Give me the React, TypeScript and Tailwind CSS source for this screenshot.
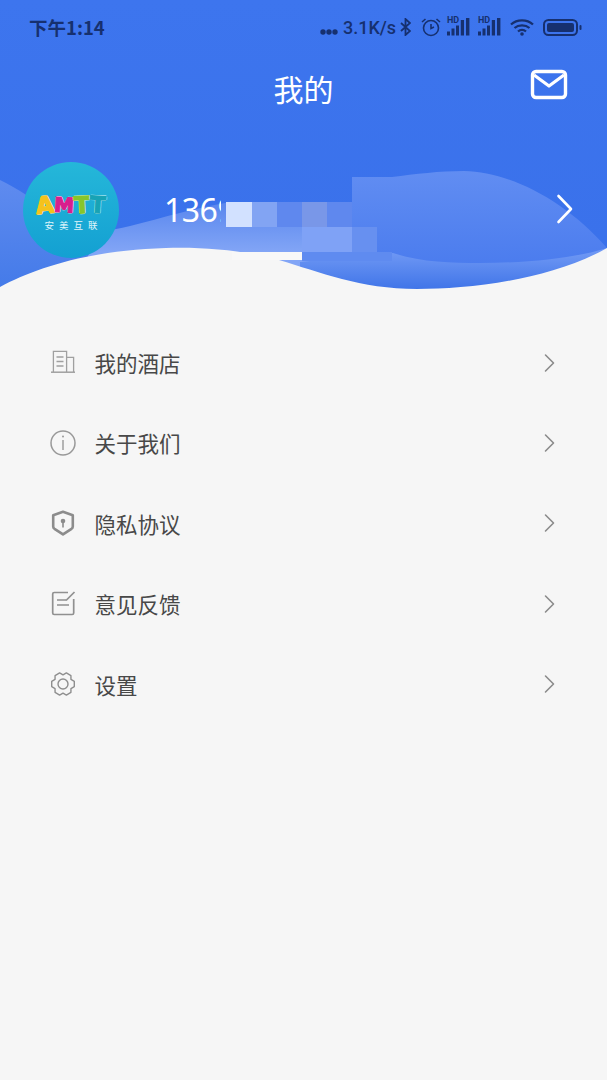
import React from "react";

const NAVY = "#16306f";

function Chevron() {
  return (
    <svg width="12" height="20" viewBox="0 0 12 20" fill="none" className="shrink-0">
      <path d="M2.500 2l8 8-8 8" stroke="#8a8a8a" strokeWidth="1.6" strokeLinecap="round" strokeLinejoin="round" />
    </svg>
  );
}

function Building() {
  return (
    <svg width="26" height="26" viewBox="0 0 26 26" fill="none" stroke="#a0a0a0" strokeWidth="1.3">
      <path d="M1 22.200h24" strokeWidth="1.500" />
      <path d="M3.400 22V1.400h13.200V22M16.600 7.400h7V22" />
      <path d="M6.500 7h7M6.500 11.500h7M6.500 16h7" />
    </svg>
  );
}

function Info() {
  return (
    <svg width="26" height="26" viewBox="0 0 26 26" fill="none" stroke="#999" strokeWidth="1.5">
      <circle cx="13" cy="13" r="12" />
      <path d="M13 10v10" strokeWidth="1.4" />
      <circle cx="13" cy="6.500" r="1" fill="#999" stroke="none" />
    </svg>
  );
}

function Shield() {
  return (
    <svg width="26" height="26" viewBox="0 0 26 26" fill="none">
      <path d="M13 1.800l9.800 3.400v11.200c0 1-.5 1.800-1.300 2.400L13 24.400l-8.500-5.600c-.8-.6-1.300-1.400-1.300-2.400V5.200z" stroke="#8c8c8c" strokeWidth="2.600" strokeLinejoin="round" />
      <circle cx="13" cy="11" r="2.300" fill="#8c8c8c" />
      <path d="M13 12v5.500" stroke="#8c8c8c" strokeWidth="1.600" />
    </svg>
  );
}

function Note() {
  return (
    <svg width="26" height="26" viewBox="0 0 26 26" fill="none" stroke="#909090" strokeWidth="1.700">
      <path d="M18 1.500H4.200c-.9 0-1.500.6-1.500 1.500v19c0 .9.6 1.500 1.500 1.500h18c.9 0 1.500-.6 1.500-1.500V8" strokeLinejoin="round" />
      <path d="M7 9h9M7 14h12" />
      <path d="M16 9.500L24.500 1" />
    </svg>
  );
}

function Gear() {
  const pts: string[] = [];
  for (let i = 0; i < 6; i++) {
    const a = i * 60;
    for (const [d, r] of [[-13, 11.6], [13, 11.6], [30, 9.2]] as const) {
      const t = ((a + d) * Math.PI) / 180;
      pts.push(`${(13 + r * Math.cos(t)).toFixed(2)},${(13 + r * Math.sin(t)).toFixed(2)}`);
    }
  }
  return (
    <svg width="26" height="26" viewBox="0 0 26 26" fill="none" stroke="#8e8e8e" strokeWidth="1.400" strokeLinejoin="round">
      <polygon points={pts.join(" ")} />
      <circle cx="13" cy="13" r="5" />
    </svg>
  );
}

function HdSignal() {
  return (
    <div className="relative w-[24px] h-[18px] shrink-0">
      <span className="absolute left-0 top-[-3px] text-[9px] leading-[10px] font-bold text-[#16306f] font-['Roboto',sans-serif]">HD</span>
      <svg width="24" height="18" viewBox="0 0 24 18" className="absolute left-0 top-0" fill={NAVY}>
        <rect x="0" y="13.500" width="3" height="4" />
        <rect x="4.500" y="10.500" width="3" height="7" />
        <rect x="9" y="7.500" width="3" height="10" />
        <rect x="13.800" y="2" width="3.200" height="15.500" />
        <rect x="19" y="0" width="3.400" height="17.500" />
      </svg>
    </div>
  );
}

const rows = [
  { label: "我的酒店", Icon: Building },
  { label: "关于我们", Icon: Info },
  { label: "隐私协议", Icon: Shield },
  { label: "意见反馈", Icon: Note },
  { label: "设置", Icon: Gear },
];

export default function App() {
  return (
    <div className="relative w-[607px] h-[1080px] overflow-hidden bg-[#f6f6f6] font-['Noto_Sans_CJK_SC','Noto_Sans',sans-serif]">
      {/* header artwork */}
      <svg className="absolute left-0 top-0" width="607" height="310" viewBox="0 0 607 310">
        <defs>
          <linearGradient id="bg" x1="0" y1="0" x2="0" y2="1">
            <stop offset="0" stopColor="#3d75ee" />
            <stop offset="1" stopColor="#3970ea" />
          </linearGradient>
          <linearGradient id="w2" gradientUnits="userSpaceOnUse" x1="0" y1="171" x2="0" y2="265">
            <stop offset="0" stopColor="#618df2" />
            <stop offset="1" stopColor="#4b7cee" />
          </linearGradient>
          <linearGradient id="w3" gradientUnits="userSpaceOnUse" x1="0" y1="252" x2="0" y2="290">
            <stop offset="0" stopColor="#6f98f4" />
            <stop offset="1" stopColor="#3f74e8" />
          </linearGradient>
          <linearGradient id="w1" gradientUnits="userSpaceOnUse" x1="0" y1="205" x2="0" y2="252">
            <stop offset="0" stopColor="#5b88ee" />
            <stop offset="1" stopColor="#82a5f6" />
          </linearGradient>
          <linearGradient id="w0" gradientUnits="userSpaceOnUse" x1="0" y1="180" x2="0" y2="285">
            <stop offset="0" stopColor="#5f8bef" />
            <stop offset="1" stopColor="#457be9" />
          </linearGradient>
        </defs>
        <rect width="607" height="310" fill="url(#bg)" />
        <path d="M0 180C35 197 60 220 100 250L120 262L0 295Z" fill="url(#w0)" />
        <path d="M352 177L392 177C415 174 440 171 464 171C510 172 565 200 607 248L607 300L352 300Z" fill="url(#w2)" />
        <path d="M100 232C140 226 180 210 232 202L352 202L352 272L80 272Z" fill="url(#w1)" />
        <path d="M300 262L393 253C420 262 450 263 480 263C530 263 575 258 607 248L607 300L300 300Z" fill="url(#w3)" />
        {/* mosaic */}
        <rect x="252" y="202" width="25" height="25" fill="#82a4f3" />
        <rect x="277" y="202" width="25" height="25" fill="#5f88ee" />
        <rect x="302" y="202" width="25" height="25" fill="#7997e8" />
        <rect x="327" y="202" width="25" height="25" fill="#5f88ee" />
        <rect x="302" y="227" width="50" height="25" fill="#7fa2f6" />
        <rect x="352" y="227" width="25" height="25" fill="#6790f0" />
        <rect x="226" y="202" width="26" height="25" fill="#d2e1ff" />
        <rect x="302" y="252" width="90" height="9" fill="#5f8bf0" />
        {/* white wave */}
        <path d="M0 287C35 268 90 250 166 248C205 247 240 250 279 260C320 272 360 289 417 289C470 289 550 280 607 248L607 310L0 310Z" fill="#f6f6f6" />
        <rect x="232" y="252" width="70" height="8" fill="#f8f8f8" />
      </svg>

      <div className="relative flex flex-col">
        {/* status bar */}
        <div className="h-[54px] flex items-center pl-[29px] pr-[25px] text-[#16306f]">
          <span className="text-[18.500px] font-bold leading-none">下午1:14</span>
          <div className="ml-auto flex items-center">
            <svg width="18" height="6" viewBox="0 0 18 6" fill={NAVY} className="mt-[10px]">
              <circle cx="3" cy="3" r="2.700" /><circle cx="9" cy="3" r="2.700" /><circle cx="15" cy="3" r="2.700" />
            </svg>
            <span className="ml-[5px] w-[52px] mt-[2px] text-[18px] leading-none font-medium font-['Roboto',sans-serif]">3.1K/s</span>
            <svg width="11" height="18" viewBox="0 0 11 18" fill="none" stroke={NAVY} strokeWidth="1.800" className="ml-[5px]">
              <path d="M1 5l9 8-4.500 4V1L10 5 1 13" />
            </svg>
            <svg width="20" height="20" viewBox="0 0 20 20" fill="none" stroke={NAVY} strokeWidth="1.600" className="ml-[10px]">
              <circle cx="10" cy="11" r="7.500" />
              <path d="M10 7v4.500l3-1.500M1 5l3.500-3M19 5l-3.500-3" />
            </svg>
            <div className="ml-[6px]"><HdSignal /></div>
            <div className="ml-[7px]"><HdSignal /></div>
            <svg width="24" height="17" viewBox="0 0 24 17" fill="none" stroke={NAVY} strokeWidth="2.300" className="ml-[8px]">
              <path d="M1 5.500C7 0 17 0 23 5.500M4.500 9C8.500 5.500 15.500 5.500 19.500 9M8 12.500c2.300-2 5.700-2 8 0" />
              <circle cx="12" cy="15" r="1.800" fill={NAVY} stroke="none" />
            </svg>
            <svg width="39" height="17" viewBox="0 0 39 17" fill="none" className="ml-[9px]">
              <rect x="1" y="1" width="33" height="15" rx="4.500" stroke={NAVY} strokeWidth="2" />
              <rect x="4" y="4" width="27" height="9" rx="2" fill={NAVY} />
              <rect x="36.500" y="6" width="2" height="5" rx="1" fill={NAVY} />
            </svg>
          </div>
        </div>

        {/* title bar */}
        <div className="relative h-[68px] flex items-center justify-center">
          <span className="text-[30px] leading-none text-white">我的</span>
          <svg width="38" height="32" viewBox="0 0 38 32" fill="none" className="absolute left-[530px] top-[15px]">
            <rect x="2.500" y="2.500" width="33" height="26" rx="3.500" stroke="white" strokeWidth="3.400" />
            <path d="M4 6l15 11L34 6" stroke="white" strokeWidth="3.200" strokeLinejoin="round" />
          </svg>
        </div>

        {/* profile row */}
        <div className="mt-[40px] h-[96px] flex items-center pl-[23px] pr-[33px]">
          <div className="w-[96px] h-[96px] rounded-full bg-gradient-to-b from-[#25b7d9] to-[#13a0d2] flex flex-col items-center shrink-0">
            <div className="mt-[33px] h-[20px] flex items-center font-['DejaVu_Sans',sans-serif] font-bold text-[23px] leading-[20px]">
              <span className="text-[#f5c21c] [-webkit-text-stroke:1.500px_#f5c21c] [text-shadow:1px_0_0_#fff8d0,-1px_0_0_#fff8d0,0_1px_0_#fff8d0,0_-1px_0_#fff8d0] -rotate-6">A</span>
              <span className="text-[#d81e8c] [-webkit-text-stroke:1.300px_#d81e8c] [text-shadow:1px_0_0_#ffd8ec,-1px_0_0_#ffd8ec,0_1px_0_#ffd8ec,0_-1px_0_#ffd8ec] text-[20px] rotate-3">M</span>
              <span className="text-[#86c52c] [-webkit-text-stroke:1.300px_#86c52c] [text-shadow:1px_0_0_#f0ffd0,-1px_0_0_#f0ffd0,0_1px_0_#f0ffd0,0_-1px_0_#f0ffd0] -rotate-3">T</span>
              <span className="text-[#17a3b5] [-webkit-text-stroke:1.300px_#17a3b5] [text-shadow:1px_0_0_#d8fbff,-1px_0_0_#d8fbff,0_1px_0_#d8fbff,0_-1px_0_#d8fbff] rotate-3">T</span>
            </div>
            <span className="mt-[4px] text-[9.500px] leading-[12px] tracking-[5px] pl-[5px] text-[#dff4fa] whitespace-nowrap">安美互联</span>
          </div>
          <div className="ml-[45px] w-[57px] h-[42px] overflow-hidden text-[32px] leading-[42px] text-white whitespace-nowrap font-['Noto_Sans',sans-serif] tracking-[-0.5px]">1369</div>
          <svg width="18" height="30" viewBox="0 0 18 30" fill="none" className="ml-auto -mt-[3px]">
            <path d="M2.500 2l12.500 13L2.500 28" stroke="white" strokeWidth="2.600" strokeLinecap="round" strokeLinejoin="round" />
          </svg>
        </div>

        {/* menu */}
        <div className="mt-[64.500px] flex flex-col pl-[50px] pr-[52px]">
          {rows.map(({ label, Icon }) => (
            <div key={label} className="h-[80.400px] flex items-center">
              <Icon />
              <span className="ml-[18.500px] text-[21.500px] leading-none text-[#484848]">{label}</span>
              <div className="ml-auto"><Chevron /></div>
            </div>
          ))}
        </div>
      </div>
    </div>
  );
}
